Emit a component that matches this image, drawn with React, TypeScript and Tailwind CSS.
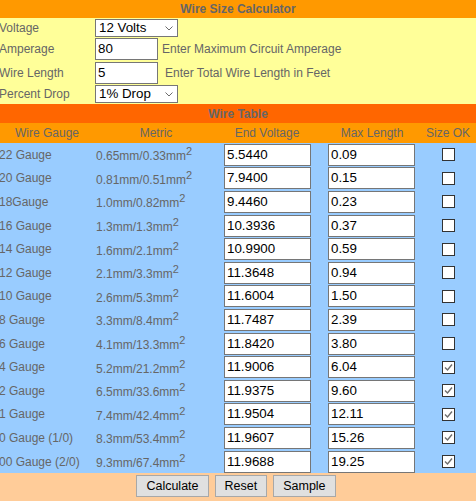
import React from "react";

const rows = [
  { gauge: "22 Gauge", metric: "0.65mm/0.33mm", volt: "5.5440", len: "0.09", ok: false },
  { gauge: "20 Gauge", metric: "0.81mm/0.51mm", volt: "7.9400", len: "0.15", ok: false },
  { gauge: "18Gauge", metric: "1.0mm/0.82mm", volt: "9.4460", len: "0.23", ok: false },
  { gauge: "16 Gauge", metric: "1.3mm/1.3mm", volt: "10.3936", len: "0.37", ok: false },
  { gauge: "14 Gauge", metric: "1.6mm/2.1mm", volt: "10.9900", len: "0.59", ok: false },
  { gauge: "12 Gauge", metric: "2.1mm/3.3mm", volt: "11.3648", len: "0.94", ok: false },
  { gauge: "10 Gauge", metric: "2.6mm/5.3mm", volt: "11.6004", len: "1.50", ok: false },
  { gauge: "8 Gauge", metric: "3.3mm/8.4mm", volt: "11.7487", len: "2.39", ok: false },
  { gauge: "6 Gauge", metric: "4.1mm/13.3mm", volt: "11.8420", len: "3.80", ok: false },
  { gauge: "4 Gauge", metric: "5.2mm/21.2mm", volt: "11.9006", len: "6.04", ok: true },
  { gauge: "2 Gauge", metric: "6.5mm/33.6mm", volt: "11.9375", len: "9.60", ok: true },
  { gauge: "1 Gauge", metric: "7.4mm/42.4mm", volt: "11.9504", len: "12.11", ok: true },
  { gauge: "0 Gauge (1/0)", metric: "8.3mm/53.4mm", volt: "11.9607", len: "15.26", ok: true },
  { gauge: "00 Gauge (2/0)", metric: "9.3mm/67.4mm", volt: "11.9688", len: "19.25", ok: true },
];

function Select({ value }: { value: string }) {
  return (
    <div className="w-[83px] h-[18px] bg-white border border-[#767676] flex items-center justify-between pl-[3px] pr-[4px] text-[13.33px] text-black">
      <span>{value}</span>
      <svg width="8" height="5" viewBox="0 0 8 5">
        <path d="M0.5 0.5 L4 4 L7.5 0.5" fill="none" stroke="#6b6b6b" strokeWidth="1" />
      </svg>
    </div>
  );
}

function Field({ value, w }: { value: string; w: string }) {
  return (
    <div className={`${w} h-[22px] bg-white border border-[#767676] flex items-center pl-[2px] text-[13.33px] text-black`}>
      {value}
    </div>
  );
}

function Check({ on }: { on: boolean }) {
  return (
    <span className="w-[13px] h-[13px] bg-white border border-[#333333] flex items-center justify-center">
      {on && (
        <svg width="11" height="11" viewBox="0 0 11 11">
          <path d="M2 5.5 L4.5 8 L9 2.5" fill="none" stroke="#6e6e6e" strokeWidth="1.4" />
        </svg>
      )}
    </span>
  );
}

export default function App() {
  return (
    <div
      className="w-[476px] h-[501px] overflow-hidden text-[12px] text-[#666666]"
      style={{ fontFamily: '"Liberation Sans", Arial, sans-serif' }}
    >
      {/* title */}
      <div className="h-[18px] bg-[#FF9900] flex items-center justify-center font-bold">
        Wire Size Calculator
      </div>

      {/* inputs */}
      <div className="h-[86px] bg-[#FFFF99] flex flex-col">
        <div className="h-[20px] flex items-center">
          <span className="w-[96px] -ml-[1px]">Voltage</span>
          <Select value="12 Volts" />
        </div>
        <div className="h-[24px] flex items-start">
          <span className="w-[96px] -ml-[1px] leading-[22px]">Amperage</span>
          <Field value="80" w="w-[63px]" />
          <span className="ml-[4px] leading-[22px]">Enter Maximum Circuit Amperage</span>
        </div>
        <div className="h-[23px] flex items-start">
          <span className="w-[96px] -ml-[1px] leading-[22px]">Wire Length</span>
          <Field value="5" w="w-[63px]" />
          <span className="ml-[7px] leading-[22px]">Enter Total Wire Length in Feet</span>
        </div>
        <div className="h-[19px] flex items-start">
          <span className="w-[96px] -ml-[1px] leading-[18px]">Percent Drop</span>
          <Select value="1% Drop" />
        </div>
      </div>

      {/* wire table */}
      <div className="h-[19px] bg-[#FF6600] flex items-center justify-center font-bold">
        Wire Table
      </div>
      <div className="h-[20px] bg-[#FF9900] grid grid-cols-[94px_124px_102px_104px_52px] items-center text-center">
        <span>Wire Gauge</span>
        <span>Metric</span>
        <span className="pr-[4px]">End Voltage</span>
        <span>Max Length</span>
        <span className="pr-[4px]">Size OK</span>
      </div>

      <div className="bg-[#99CCFF]">
        {rows.map((r) => (
          <div
            key={r.gauge}
            className="h-[23.6px] grid grid-cols-[94px_124px_102px_104px_52px] items-center"
          >
            <span className="-ml-[1px] whitespace-nowrap">{r.gauge}</span>
            <span className="pl-[2px] pt-[3px] whitespace-nowrap">
              {r.metric}
              <span className="text-[11px] relative -top-[5px]">2</span>
            </span>
            <div className="pl-[6px]">
              <Field value={r.volt} w="w-[87px]" />
            </div>
            <div className="pl-[8px]">
              <Field value={r.len} w="w-[87px]" />
            </div>
            <div className="flex justify-center pr-[3px]">
              <Check on={r.ok} />
            </div>
          </div>
        ))}
      </div>

      {/* buttons */}
      <div className="h-[28px] bg-[#FFCC99] flex justify-center gap-[6px] pt-[2px] pr-[4px]">
        {["Calculate", "Reset", "Sample"].map((b) => (
          <button
            key={b}
            className="h-[22px] px-[9px] bg-[#e0e0e0] border border-[#a8a8a8] text-black text-[12.5px]"
          >
            {b}
          </button>
        ))}
      </div>
    </div>
  );
}
